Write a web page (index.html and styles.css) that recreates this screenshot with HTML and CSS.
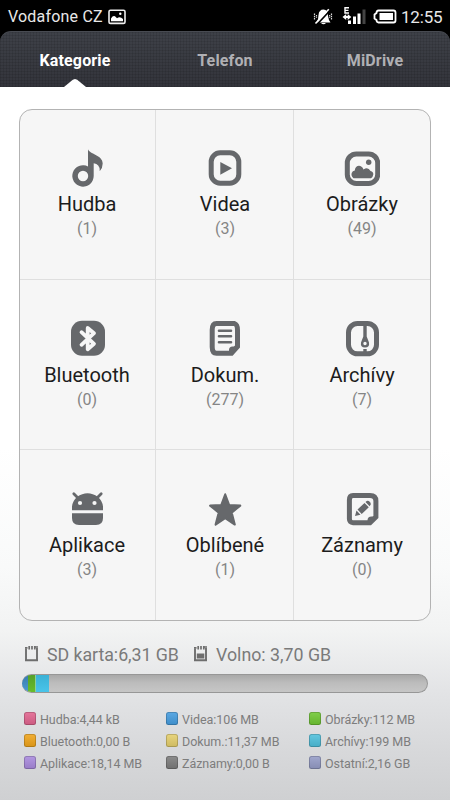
FILE: index.html
```html
<!DOCTYPE html>
<html lang="cs">
<head>
<meta charset="utf-8">
<title>Kategorie</title>
<link rel="stylesheet" href="styles.css">
</head>
<body>
<header class="status">
  <span class="carrier">Vodafone CZ</span>
  <svg class="shot" width="18" height="16" viewBox="0 0 18 16"><rect x="1" y="1.2" width="16" height="13.2" rx="1.5" fill="none" stroke="#eee" stroke-width="1.6"/><path d="M3 12.3V9.5Q5.5 5.5 8 8.2L9 9.2Q12 7.2 15 10v2.3z" fill="#fff"/><circle cx="12.3" cy="4.8" r="1.2" fill="#fff"/></svg>
  <span class="spacer"></span>
  <svg width="20" height="18" viewBox="0 0 20 18"><path d="M3.500 14.500Q5.500 12 5.500 7Q6 1.500 10.500 1.500Q15 1.500 15 8Q15.500 12 17.500 14.500zM8 15h5q-2.500 2.500-5 0" fill="#fff"/><path d="M1.500 5.500v6M3.500 7v3M18.500 5.500v6M16.700 7v3" stroke="#ddd" stroke-width="1.200" stroke-dasharray="1.500 .7"/><path d="M4.500 15.800L17 2.500" stroke="#000" stroke-width="1.800"/><path d="M2.500 15.500L15.800 1.300" stroke="#fff" stroke-width="1.600"/></svg>
  <svg class="signal" width="25" height="20" viewBox="0 0 25 20"><path d="M8 1.800H4V7h4M4 4.400h3.500" fill="none" stroke="#fff" stroke-width="1.400"/><path d="M1.500 11l3.700-3v2h1.500v-2L10.300 11l-3.600 3V12H5.200v2z" fill="#fff"/><path d="M7 14.500h3V18H7zM12 10.500h3V18h-3zM16.500 7.500h3V18h-3z" fill="#fff"/><path d="M21.500 3.500h3V18h-3z" fill="#444"/></svg>
  <svg class="battery" width="24" height="15" viewBox="0 0 24 15"><path d="M5.500 1.500h15q2 0 2 2v8q0 2-2 2h-15q-1.800 0-2-2.500L1.500 9.500v-4L3.500 4q0-2.500 2-2.500z" fill="#000" stroke="#fff" stroke-width="1.800"/><rect x="6.500" y="4" width="13.500" height="7" fill="#fff"/></svg>
  <span class="clock">12:55</span>
</header>
<nav class="tabs">
  <div class="tab active"><span>Kategorie</span></div>
  <div class="tab"><span>Telefon</span></div>
  <div class="tab"><span>MiDrive</span></div>
</nav>
<main>
  <section class="grid">
    <div class="cell"><svg class="icon" viewBox="0 0 36 38"><path fill-rule="evenodd" d="M19 .3C20 5 33.700 6 33.700 14.500Q33.700 19 30.700 22.200Q31 15 24.700 14.300V27A10.700 10.700 0 1 1 19 17.500zM14 21.800a5.200 5.200 0 1 0 0 10.400a5.200 5.200 0 1 0 0-10.400z"/></svg><b>Hudba</b><i>(1)</i></div>
    <div class="cell"><svg class="icon" viewBox="0 0 36 38"><rect class="line" x="4.200" y="3.800" width="27.600" height="30.400" rx="9"/><path d="M13.300 13L25 19.300L13.300 25.700z"/></svg><b>Videa</b><i>(3)</i></div>
    <div class="cell"><svg class="icon" viewBox="0 0 36 38"><rect class="line" x="3.300" y="5" width="30.400" height="29.400" rx="9"/><path d="M9.500 29.300Q6.800 27 7.700 24Q8.500 21.500 10.800 21.500C11 16 17.500 15 19.500 20.500Q24 17.500 26.500 22Q29.500 22.500 29.300 25.500Q29 28 27 29.300z"/><circle cx="24.700" cy="13.300" r="2.700"/></svg><b>Obrázky</b><i>(49)</i></div>
    <div class="cell"><svg class="icon" viewBox="0 0 36 38"><rect x="2" y=".8" width="34" height="35" rx="11"/><path class="rune" d="M12.500 12.200L25 23.800L18.700 29.300V8L25 13.200L12.500 24.800"/></svg><b>Bluetooth</b><i>(0)</i></div>
    <div class="cell"><svg class="icon" viewBox="0 0 36 38"><path class="line" d="M9.500 3.500h11.500q6.500 0 6.500 0q3 1 3 6.500V26.500L24.500 33.200H9.500q-4.300 0-4.300-6.200V10q0-6.500 4.300-6.500z"/><path d="M22 35v-5q0-3.500 3.500-3.500H32l-8 8.500z"/><path class="rows" d="M12 10.700H24M12 16.300H24M12 22.300H24"/></svg><b>Dokum.</b><i>(277)</i></div>
    <div class="cell"><svg class="icon" viewBox="0 0 36 38"><rect class="line" x="4.500" y="3.500" width="28" height="30.300" rx="9"/><path fill-rule="evenodd" d="M19.300 3h3.400v13.500l2.300 6q.8 5-4 5t-4-5l2.300-6zM21 21.800a1.700 1.700 0 1 0 0 3.400a1.700 1.700 0 1 0 0-3.400zM19.300 29h3.400v5h-3.400z"/></svg><b>Archívy</b><i>(7)</i></div>
    <div class="cell"><svg class="icon" viewBox="0 0 36 38"><path d="M3 20.200V16.500Q3.500 11 8 7Q18.500 -.5 29 7Q33.500 11 34 16.500V20.200zM3 23.200H34V28q0 7-7 7H10q-7 0-7-7z"/><path class="antenna" d="M4.800 3.800L9 8M32.200 3.800L28 8"/><circle class="eye" cx="11" cy="13" r="2.100"/><circle class="eye" cx="25.500" cy="13" r="2.100"/></svg><b>Aplikace</b><i>(3)</i></div>
    <div class="cell"><svg class="icon" viewBox="0 0 36 38"><path class="star" d="M18.200 4.300L22.200 15L33.300 15.600L24.700 22.600L27.800 34.600L18.200 28.200L8.600 34.600L11.700 22.600L3.100 15.600L14.200 15z"/></svg><b>Oblíbené</b><i>(1)</i></div>
    <div class="cell"><svg class="icon" viewBox="0 0 36 38"><path class="line" d="M9 5.400h17q5.900 0 5.900 5.500V27L26 32.700H9q-3.600 0-3.600-4V10q0-4.600 3.600-4.600z"/><path d="M23.500 34v-3.500q0-4 4-4H33l-8 8.500z"/><path d="M11 26l1.500-5.500l4 4.200zM13.500 19.600L20.500 13l4.300 4.300L17.700 24zM21.500 12.100l1.200-1q1.500-.8 3 .7t.9 3l-1 1.500z"/></svg><b>Záznamy</b><i>(0)</i></div>
  </section>
  <section class="storage">
    <svg class="card" width="15" height="17" viewBox="0 0 15 17"><path d="M2 15.300V3.500M1 15.300H14M13 15.300V3" fill="none" stroke="#6e6e6e" stroke-width="1.900"/><path d="M1 2.800h2.500M5.200 1v3.500M8 1v3.500M10.800 1v3.500M10 2H14" fill="none" stroke="#6e6e6e" stroke-width="1.700"/></svg>
    <span class="total">SD karta:6,31 GB</span>
    <svg class="card" width="15" height="17" viewBox="0 0 15 17"><path d="M2 15.300V3.500M1 15.300H14M13 15.300V3" fill="none" stroke="#6e6e6e" stroke-width="1.900"/><path d="M1 2.800h2.500M5.200 1v3.500M8 1v3.500M10.800 1v3.500M10 2H14" fill="none" stroke="#6e6e6e" stroke-width="1.700"/><path d="M3.800 8.500h7.500v5H3.800z" fill="#6e6e6e"/></svg>
    <span class="free">Volno: 3,70 GB</span>
  </section>
  <div class="bar"><span class="used video"></span><span class="used photo"></span><span class="used archive"></span></div>
  <section class="legend">
    <span class="pink">Hudba:4,44 kB</span><span class="blue">Videa:106 MB</span><span class="green">Obrázky:112 MB</span>
    <span class="orange">Bluetooth:0,00 B</span><span class="yellow">Dokum.:11,37 MB</span><span class="cyan">Archívy:199 MB</span>
    <span class="purple">Aplikace:18,14 MB</span><span class="gray">Záznamy:0,00 B</span><span class="slate">Ostatní:2,16 GB</span>
  </section>
</main>
</body>
</html>
```
FILE: styles.css
```css
* { box-sizing: border-box; }
body { margin: 0; width: 450px; height: 800px; overflow: hidden; background: #000; font-family: Roboto, "Liberation Sans", sans-serif; }
.status { display: flex; align-items: center; height: 31px; padding: 2px 8px 0 8px; color: #e8e8e8; }
.carrier { font-size: 16px; letter-spacing: .2px; width: 100px; white-space: nowrap; }
.spacer { flex: 1; }
.signal { margin-left: 8px; margin-top: -2px; }
.battery { margin-left: 7px; }
.clock { font-size: 17px; margin-left: 4px; letter-spacing: -.2px; width: 41px; white-space: nowrap; }
.tabs {
  display: grid; grid-template-columns: repeat(3, 1fr); height: 56px; border-radius: 11px 11px 0 0;
  border-top: 1px solid #484b52;
  background: repeating-linear-gradient(0deg, rgba(0,0,0,.09) 0 1px, transparent 1px 3px), repeating-linear-gradient(90deg, rgba(0,0,0,.09) 0 1px, transparent 1px 3px), linear-gradient(#3e4148, #33343b);
}
.tab { position: relative; display: flex; justify-content: center; padding-top: 19px; color: #b0b0b4; font-size: 16px; font-weight: 700; line-height: 20px; letter-spacing: .15px; }
.active { color: #fff; }
.active::after { content: ""; position: absolute; bottom: 0; left: 64px; width: 22px; height: 8px; background: #fff; clip-path: polygon(0 100%, 40% 8%, 50% 0, 60% 8%, 100% 100%); }
main { height: 713px; padding: 22px 19px 0; background: linear-gradient(#fff 0, #fff 360px, #f9fafa 480px, #f2f3f3 543px, #e3e4e6 603px, #d7d8da 665px, #cfd0d2 713px); }
.grid { display: grid; grid-template-columns: 136px 138px 136px; grid-template-rows: 170px 170px 170px; width: 412px; height: 512px; border: 1px solid #b3b3b3; border-radius: 13px; background: #f6f6f6; overflow: hidden; }
.cell { display: flex; flex-direction: column; align-items: center; padding-top: 40px; border-right: 1px solid #dfdfdf; border-bottom: 1px solid #dfdfdf; }
.cell:nth-child(-n+3) { padding-top: 39px; }
.cell:nth-child(3n) { border-right: 0; }
.cell:nth-child(3n+1) { padding-right: 1px; }
.cell:nth-child(3n+2) { padding-left: 1px; }
.cell:nth-child(n+7) { border-bottom: 0; }
.icon { width: 36px; height: 38px; flex: none; fill: #66686b; }
.line { fill: none; stroke: #66686b; stroke-width: 5; }
.rune { fill: none; stroke: #f6f6f6; stroke-width: 3.8; stroke-linejoin: round; stroke-linecap: round; }
.rows { stroke: #66686b; stroke-width: 2.6; stroke-linecap: round; }
.antenna { stroke: #66686b; stroke-width: 2.8; stroke-linecap: round; }
.eye { fill: #f6f6f6; }
.star { stroke: #66686b; stroke-width: 2; stroke-linejoin: round; }
.cell b { font-size: 20px; font-weight: 400; line-height: 24px; margin-top: 5px; color: #1c1c1c; }
.cell i { font-size: 16px; font-style: normal; line-height: 20px; margin-top: 3px; color: #858585; }
.storage { display: flex; align-items: center; margin-top: 20px; height: 26px; padding-left: 5px; color: #7a7a7a; font-size: 17.8px; letter-spacing: -.05px; white-space: nowrap; }
.card { flex: none; margin-top: -1px; }
.total { width: 138px; margin: 0 8px; }
.free { padding-left: 8px; letter-spacing: 0; }
.bar { display: flex; width: 406px; height: 19px; margin: 7px 0 0 3px; border-radius: 10px; overflow: hidden; border: 1px solid #979797; border-left: 0; background: linear-gradient(#a9a9a9, #bcbcbc 45%, #c6c6c6); }
.used { height: 100%; }
.video { width: 6px; background: linear-gradient(#397bad, #4c9bd2); }
.photo { width: 8px; background: linear-gradient(#55a02a, #68bd2c); border-right: 1px solid #8bcf9c; }
.archive { width: 13px; background: linear-gradient(#3ab1d6, #49c4ea); }
.legend { display: grid; grid-template-columns: 142px 143px 1fr; grid-auto-rows: 22px; margin-top: 15px; padding-left: 5px; color: #7d7d7d; font-size: 12.5px; letter-spacing: -.05px; white-space: nowrap; }
.legend span { display: flex; align-items: center; }
.legend span::before { content: ""; width: 10px; height: 11px; margin: -1px 4px 0 0; border-radius: 2.5px; border: 1px solid rgba(0,0,0,.18); background: linear-gradient(rgba(255,255,255,.12), rgba(0,0,0,.1)) border-box, var(--c); flex: none; }
.pink { --c: #e2648f; } .blue { --c: #459de0; } .green { --c: #70c833; }
.orange { --c: #f0a41a; } .yellow { --c: #e5cf6c; } .cyan { --c: #4fc0dc; }
.purple { --c: #a98ade; } .gray { --c: #7c7c7c; } .slate { --c: #959cc7; }
```
